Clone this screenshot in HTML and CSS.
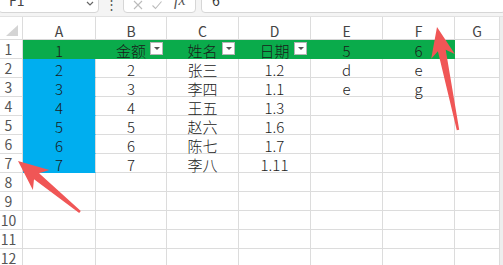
FILE: index.html
```html
<!DOCTYPE html>
<html lang="zh">
<head>
<meta charset="utf-8">
<link rel="stylesheet" href="styles.css">
</head>
<body>
<div class="app">
  <div class="fbar">
    <div class="namebox"><span class="nb-text">F1</span>
      <svg class="chev" width="8" height="6" viewBox="0 0 8 6"><path d="M1 1 L4 4 L7 1" fill="none" stroke="#666" stroke-width="1.2"/></svg>
    </div>
    <div class="vsep">⋮</div>
    <div class="fxbox">
      <svg class="ico" width="12" height="12" viewBox="0 0 12 12"><path d="M2 2 L10 10 M10 2 L2 10" stroke="#bbb" stroke-width="1.1"/></svg>
      <svg class="ico" width="12" height="12" viewBox="0 0 12 12"><path d="M1.5 6.5 L4.5 9.5 L10.5 2.5" fill="none" stroke="#bbb" stroke-width="1.1"/></svg>
      <span class="fx">fx</span>
    </div>
    <div class="formula">6</div>
  </div>
  <div class="sheet">
    <div class="corner"><span class="tri"></span></div>
    <div class="ch">A</div><div class="ch">B</div><div class="ch">C</div><div class="ch">D</div><div class="ch">E</div><div class="ch">F</div><div class="ch">G</div>

    <div class="rh">1</div>
    <div class="c green">1</div>
    <div class="c green flt">金额<span class="dd"></span></div>
    <div class="c green flt">姓名<span class="dd"></span></div>
    <div class="c green flt">日期<span class="dd"></span></div>
    <div class="c green">5</div>
    <div class="c green">6</div>
    <div class="c"></div>

    <div class="rh">2</div><div class="c blue">2</div><div class="c">2</div><div class="c">张三</div><div class="c">1.2</div><div class="c">d</div><div class="c">e</div><div class="c"></div>
    <div class="rh">3</div><div class="c blue">3</div><div class="c">3</div><div class="c">李四</div><div class="c">1.1</div><div class="c">e</div><div class="c">g</div><div class="c"></div>
    <div class="rh">4</div><div class="c blue">4</div><div class="c">4</div><div class="c">王五</div><div class="c">1.3</div><div class="c"></div><div class="c"></div><div class="c"></div>
    <div class="rh">5</div><div class="c blue">5</div><div class="c">5</div><div class="c">赵六</div><div class="c">1.6</div><div class="c"></div><div class="c"></div><div class="c"></div>
    <div class="rh">6</div><div class="c blue">6</div><div class="c">6</div><div class="c">陈七</div><div class="c">1.7</div><div class="c"></div><div class="c"></div><div class="c"></div>
    <div class="rh">7</div><div class="c blue">7</div><div class="c">7</div><div class="c">李八</div><div class="c">1.11</div><div class="c"></div><div class="c"></div><div class="c"></div>
    <div class="rh">8</div><div class="c"></div><div class="c"></div><div class="c"></div><div class="c"></div><div class="c"></div><div class="c"></div><div class="c"></div>
    <div class="rh">9</div><div class="c"></div><div class="c"></div><div class="c"></div><div class="c"></div><div class="c"></div><div class="c"></div><div class="c"></div>
    <div class="rh">10</div><div class="c"></div><div class="c"></div><div class="c"></div><div class="c"></div><div class="c"></div><div class="c"></div><div class="c"></div>
    <div class="rh">11</div><div class="c"></div><div class="c"></div><div class="c"></div><div class="c"></div><div class="c"></div><div class="c"></div><div class="c"></div>
    <div class="rh">12</div><div class="c"></div><div class="c"></div><div class="c"></div><div class="c"></div><div class="c"></div><div class="c"></div><div class="c"></div>
  </div>
  <svg class="arrows" width="503" height="265" viewBox="0 0 503 265">
    <polygon points="18,161 32.9,190.1 34.0,179.3 79.2,212.9 80.8,211.1 39.1,173.2 49.4,170.0"/>
    <polygon points="437,27 431.2,58.8 437.9,51.3 456.8,130.2 459.2,129.8 445.7,49.7 454.8,54.0"/>
  </svg>
</div>
</body>
</html>
```
FILE: styles.css
```css
html, body {
  margin: 0;
  padding: 0;
  background: #fff;
  overflow: hidden;
}
.app {
  position: relative;
  width: 503px;
  height: 265px;
  overflow: hidden;
  font-family: "Noto Sans CJK SC", "Liberation Sans", sans-serif;
}
.fbar {
  height: 16px;
  background: #f4f4f4;
  border-bottom: 1px solid #e2e2e2;
  display: flex;
  align-items: flex-end;
  overflow: hidden;
}
.namebox, .fxbox, .formula {
  height: 26px;
  margin-bottom: 3px;
  background: #fff;
  border: 1px solid #d6d6d6;
  border-radius: 4px;
  box-sizing: border-box;
  display: flex;
  align-items: center;
  font-size: 14px;
  color: #333;
}
.namebox {
  width: 101px;
  margin-left: -2px;
  padding: 0 4px 0 10px;
  justify-content: space-between;
}
.nb-text { color: #444; }
.chev { margin-top: 8px; }
.vsep {
  width: 24px;
  text-align: center;
  color: #555;
  font-size: 13px;
  line-height: 13px;
  margin-bottom: 6px;
}
.fxbox {
  width: 73px;
  padding: 0 4px 0 8px;
  gap: 7px;
}
.fxbox .ico { margin-top: 10px; }
.fx {
  font-family: "Liberation Serif", serif;
  font-style: italic;
  font-size: 16px;
  color: #555;
  margin-left: 4px;
}
.formula {
  flex: 1;
  margin-left: 5px;
  margin-right: -3px;
  padding-left: 10px;
  color: #333;
}
.sheet {
  display: grid;
  grid-template-columns: 23px 73px 71px 72px 72px 72px 72px 1fr;
  grid-template-rows: 23px repeat(12, 19px);
  width: 500px;
  border-right: 3px solid #eeeeee;
}
.corner, .ch, .rh, .c {
  box-sizing: border-box;
  border-right: 1px solid #dcdcdc;
  border-bottom: 1px solid #dcdcdc;
}
.corner {
  position: relative;
  background: #fff;
}
.tri {
  position: absolute;
  right: 4px;
  bottom: 3px;
  width: 0;
  height: 0;
  border-left: 12px solid transparent;
  border-bottom: 11px solid #d4d4d4;
}
.ch {
  background: #fff;
  color: #444;
  font-size: 14px;
  line-height: 22px;
  text-align: center;
  padding-top: 3px;
  border-bottom-color: #d6d6d6;
}
.rh {
  background: #fff;
  color: #555;
  font-size: 14px;
  line-height: 19px;
  text-align: center;
  padding-right: 5px;
}
.c {
  position: relative;
  font-size: 15px;
  line-height: 19px;
  text-align: center;
  color: #222;
  padding-top: 1px;
  font-weight: 300;
}
.green {
  background: #0aab4b;
  border-color: #0aab4b;
  color: #1a1a1a;
}
.blue {
  background: #00aeef;
  border-bottom-color: #00aeef;
  color: #1a1a1a;
}
.dd {
  position: absolute;
  right: 3px;
  top: 2px;
  width: 13px;
  height: 13px;
  box-sizing: border-box;
  background: #fff;
  border: 1px solid #b5b5b5;
}
.dd::after {
  content: "";
  position: absolute;
  left: 3px;
  top: 4px;
  border-left: 3px solid transparent;
  border-right: 3px solid transparent;
  border-top: 3px solid #555;
}
.arrows {
  position: absolute;
  left: 0;
  top: 0;
  pointer-events: none;
}
.arrows polygon {
  fill: #f05656;
}
```
